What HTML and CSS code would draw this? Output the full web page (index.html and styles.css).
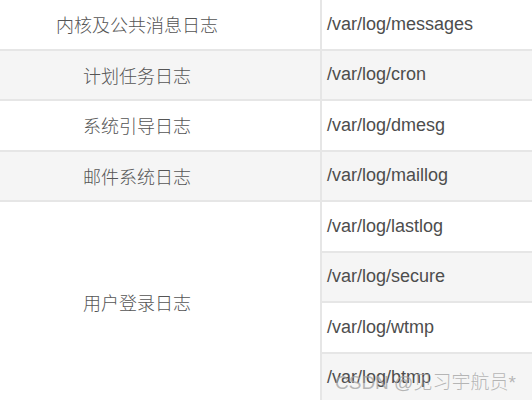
FILE: index.html
```html
<!DOCTYPE html>
<html lang="zh-CN">

<head>
    <meta charset="UTF-8">
    <title>日志文件</title>
    <link rel="stylesheet" href="styles.css">
</head>

<body>
    <div class="page">
        <table class="log-table">
            <tr>
                <td class="name">内核及公共消息日志</td>
                <td class="path">/var/log/messages</td>
            </tr>
            <tr class="alt">
                <td class="name">计划任务日志</td>
                <td class="path">/var/log/cron</td>
            </tr>
            <tr>
                <td class="name">系统引导日志</td>
                <td class="path">/var/log/dmesg</td>
            </tr>
            <tr class="alt">
                <td class="name">邮件系统日志</td>
                <td class="path">/var/log/maillog</td>
            </tr>
            <tr>
                <td class="name" rowspan="4">用户登录日志</td>
                <td class="path">/var/log/lastlog</td>
            </tr>
            <tr class="alt">
                <td class="path">/var/log/secure</td>
            </tr>
            <tr>
                <td class="path">/var/log/wtmp</td>
            </tr>
            <tr class="alt">
                <td class="path">/var/log/btmp</td>
            </tr>
        </table>
        <div class="watermark">CSDN @见习宇航员*</div>
    </div>
</body>

</html>
```

FILE: styles.css
```css
body {
    margin: 0;
    padding: 0;
    background-color: #ffffff;
    font-family: "Liberation Sans", "Noto Sans CJK SC", sans-serif;
    overflow: hidden;
}

.page {
    position: relative;
    width: 532px;
    height: 400px;
    overflow: hidden;
}

.log-table {
    border-collapse: separate;
    border-spacing: 0;
    width: 600px;
    font-size: 18px;
    color: #4d4d4d;
}

.log-table td {
    height: 48.5px;
    padding: 0;
    border-bottom: 2px solid #e6e6e6;
    vertical-align: middle;
}

.log-table .name {
    width: 272px;
    padding-right: 47px;
    padding-left: 1px;
    text-align: center;
    font-weight: 300;
    color: #555555;
    border-right: 2px solid #e6e6e6;
    background-color: #ffffff;
}

.log-table .path {
    padding-left: 5px;
    text-align: left;
}

.log-table .alt td {
    background-color: #f5f5f5;
}

.watermark {
    position: absolute;
    left: 335px;
    top: 367px;
    font-size: 19px;
    font-weight: 300;
    color: rgba(160, 160, 160, 0.75);
    white-space: nowrap;
}
```
